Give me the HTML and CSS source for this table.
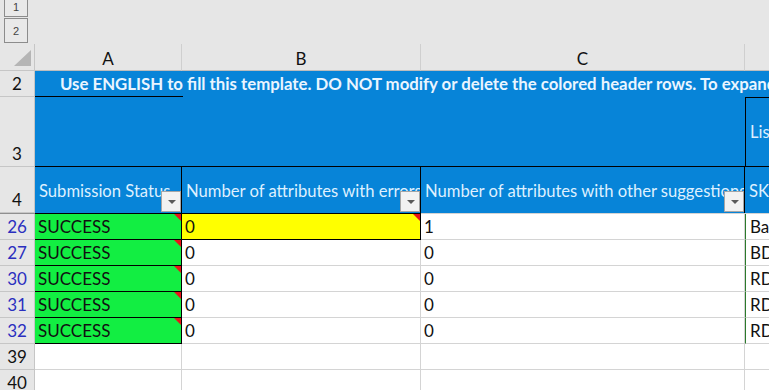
FILE: index.html
```html
<!DOCTYPE html>
<html>
<head>
<meta charset="utf-8">
<link rel="stylesheet" href="styles.css">
</head>
<body>
<div class="app">
  <div class="outline">
    <div class="lvl lvl1">1</div>
    <div class="lvl lvl2">2</div>
  </div>
  <div class="sheet">
    <div class="row colhdr">
      <div class="rh corner"><span class="tri"></span></div>
      <div class="ch a">A</div>
      <div class="ch b">B</div>
      <div class="ch c">C</div>
      <div class="ch d"></div>
    </div>
    <div class="row r2">
      <div class="rh">2</div>
      <div class="banner"><span class="bannertext">Use ENGLISH to fill this template. DO NOT modify or delete the colored header rows. To expand the template</span></div>
    </div>
    <div class="row r3">
      <div class="rh">3</div>
      <div class="blue abc"></div>
      <div class="blue d dtop"><span class="lt">List</span></div>
    </div>
    <div class="row r4">
      <div class="rh">4</div>
      <div class="hcell a"><span class="ht">Submission Status</span><span class="fbtn"></span></div>
      <div class="hcell b"><span class="ht">Number of attributes with errors</span><span class="fbtn"></span></div>
      <div class="hcell c"><span class="ht">Number of attributes with other suggestions</span><span class="fbtn"></span></div>
      <div class="hcell d"><span class="ht">SKU</span></div>
    </div>
    <div class="row freeze">
      <div class="rh fz"></div>
      <div class="fzc a dark"></div>
      <div class="fzc b dark"></div>
      <div class="fzc c"></div>
      <div class="fzc d"></div>
    </div>
    <div class="row data">
      <div class="rh filt">26</div>
      <div class="cell a ok">SUCCESS<span class="note"></span></div>
      <div class="cell b warn">0<span class="note"></span></div>
      <div class="cell c">1</div>
      <div class="cell d sku">Ba</div>
    </div>
    <div class="row data">
      <div class="rh filt">27</div>
      <div class="cell a ok">SUCCESS<span class="note"></span></div>
      <div class="cell b">0</div>
      <div class="cell c">0</div>
      <div class="cell d sku">BD</div>
    </div>
    <div class="row data">
      <div class="rh filt">30</div>
      <div class="cell a ok">SUCCESS<span class="note"></span></div>
      <div class="cell b">0</div>
      <div class="cell c">0</div>
      <div class="cell d sku">RD</div>
    </div>
    <div class="row data">
      <div class="rh filt">31</div>
      <div class="cell a ok">SUCCESS<span class="note"></span></div>
      <div class="cell b">0</div>
      <div class="cell c">0</div>
      <div class="cell d sku">RD</div>
    </div>
    <div class="row data">
      <div class="rh filt">32</div>
      <div class="cell a ok">SUCCESS<span class="note"></span></div>
      <div class="cell b">0</div>
      <div class="cell c">0</div>
      <div class="cell d sku">RD</div>
    </div>
    <div class="row data">
      <div class="rh">39</div>
      <div class="cell a"></div>
      <div class="cell b"></div>
      <div class="cell c"></div>
      <div class="cell d"></div>
    </div>
    <div class="row data">
      <div class="rh">40</div>
      <div class="cell a"></div>
      <div class="cell b"></div>
      <div class="cell c"></div>
      <div class="cell d"></div>
    </div>
  </div>
</div>
</body>
</html>
```

FILE: styles.css
```css
* { box-sizing: border-box; }
html, body { margin: 0; padding: 0; }
body {
  width: 769px;
  height: 390px;
  overflow: hidden;
  background: #ffffff;
  font-family: Lato, "Open Sans", sans-serif;
  color: #000;
}
.app { display: flex; flex-direction: column; }

.outline {
  height: 44px;
  background: #e6e6e6;
  display: flex;
  flex-direction: column;
  padding-left: 4px;
}
.lvl {
  width: 24px;
  border: 1px solid #8c8c8c;
  background: #e9e9e9;
  color: #444;
  font-size: 11px;
  display: flex;
  align-items: center;
  justify-content: center;
  font-family: "Liberation Sans", sans-serif;
}
.lvl1 { height: 17px; border-top: none; padding-bottom: 2px; }
.lvl2 { height: 25px; margin-top: 1px; }

.sheet { display: flex; flex-direction: column; }
.row { display: flex; }

.rh {
  width: 35px;
  flex: none;
  background: #e6e6e6;
  border-right: 1px solid #c6c6c6;
  border-bottom: 1px solid #c6c6c6;
  display: flex;
  align-items: flex-end;
  justify-content: center;
  font-size: 17px;
  line-height: 20px;
  padding-bottom: 2px;
  color: #111;
}
.rh.filt { color: #2b2fbf; }

.a { width: 147px; flex: none; }
.b { width: 239px; flex: none; }
.c { width: 324px; flex: none; }
.d { flex: 1; min-width: 0; }

/* column header */
.colhdr { height: 27px; }
.colhdr .rh { position: relative; background: #e6e6e6; }
.corner .tri {
  position: absolute;
  left: 14px;
  top: 6px;
  width: 0; height: 0;
  border-left: 17px solid transparent;
  border-bottom: 16px solid #b5b5b5;
}
.ch {
  background: #e6e6e6;
  border-right: 1px solid #cfcfcf;
  border-bottom: 1px solid #bdbdbd;
  display: flex;
  align-items: center;
  justify-content: center;
  font-size: 17px;
  padding-top: 2px;
  color: #111;
}
.ch.d { border-right: none; }

/* row 2 */
.r2 { height: 26px; }
.r2 .rh { align-items: center; padding-bottom: 0; }
.banner {
  flex: 1;
  min-width: 0;
  overflow: hidden;
  white-space: nowrap;
  background: linear-gradient(#000, #000) 0 100% / 148px 1px no-repeat, #0784d8;
  display: flex;
  align-items: flex-end;
  padding-left: 25px;
  padding-bottom: 3px;
}
.bannertext {
  color: #eaf5ff;
  font-weight: 700;
  font-size: 16.8px;
  line-height: 20px;
}

/* row 3 */
.r3 { height: 70px; }
.blue { background: #0784d8; border-bottom: 1px solid #000; }
.abc { width: 710px; flex: none; }
.dtop {
  border-left: 1px solid #000;
  border-top: 1px solid #000;
  display: flex;
  align-items: center;
  padding-left: 4px;
  overflow: hidden;
  white-space: nowrap;
}
.lt { color: #dceeff; font-size: 16.5px; }

/* row 4 */
.r4 { height: 46px; }
.hcell {
  position: relative;
  background: #0784d8;
  border-right: 1px solid #000;
  display: flex;
  align-items: center;
  padding-left: 4px;
  overflow: hidden;
  white-space: nowrap;
}
.hcell.d { border-right: none; }
.ht { color: #def0ff; font-size: 16.6px; line-height: 20px; padding-top: 1px; }
.fbtn {
  position: absolute;
  right: 0;
  bottom: 1px;
  width: 20px;
  height: 21px;
  background: #f2f2f2;
  border: 1px solid #a6a6a6;
}
.fbtn::after {
  content: "";
  position: absolute;
  left: 6px;
  top: 8px;
  width: 0; height: 0;
  border-left: 4px solid transparent;
  border-right: 4px solid transparent;
  border-top: 4px solid #5a5a5a;
}

/* freeze line */
.freeze { height: 1px; }
.rh.fz { border: none; background: #8f8f8f; padding: 0; }
.fzc { background: #d4d4d4; }
.fzc.dark { background: #000; }

/* data */
.data { height: 26px; }
.cell {
  position: relative;
  background: #fff;
  border-right: 1px solid #d4d4d4;
  border-bottom: 1px solid #d4d4d4;
  display: flex;
  align-items: flex-end;
  padding-left: 3px;
  padding-bottom: 2px;
  font-size: 17px;
  line-height: 20px;
  white-space: nowrap;
  overflow: hidden;
  color: #111;
}
.cell.d { border-right: none; }
.cell.ok {
  background: #12ee42;
  border-right: 1px solid #000;
  border-bottom: 1px solid #000;
}
.cell.warn {
  background: #ffff00;
  border-right: 1px solid #000;
  border-bottom: 1px solid #000;
}
.cell.sku { border-left: 1px solid #2c7a2c; padding-left: 4px; }
.note {
  position: absolute;
  top: 0;
  right: 0;
  width: 0; height: 0;
  border-left: 7px solid transparent;
  border-top: 7px solid #e8141a;
}
```
